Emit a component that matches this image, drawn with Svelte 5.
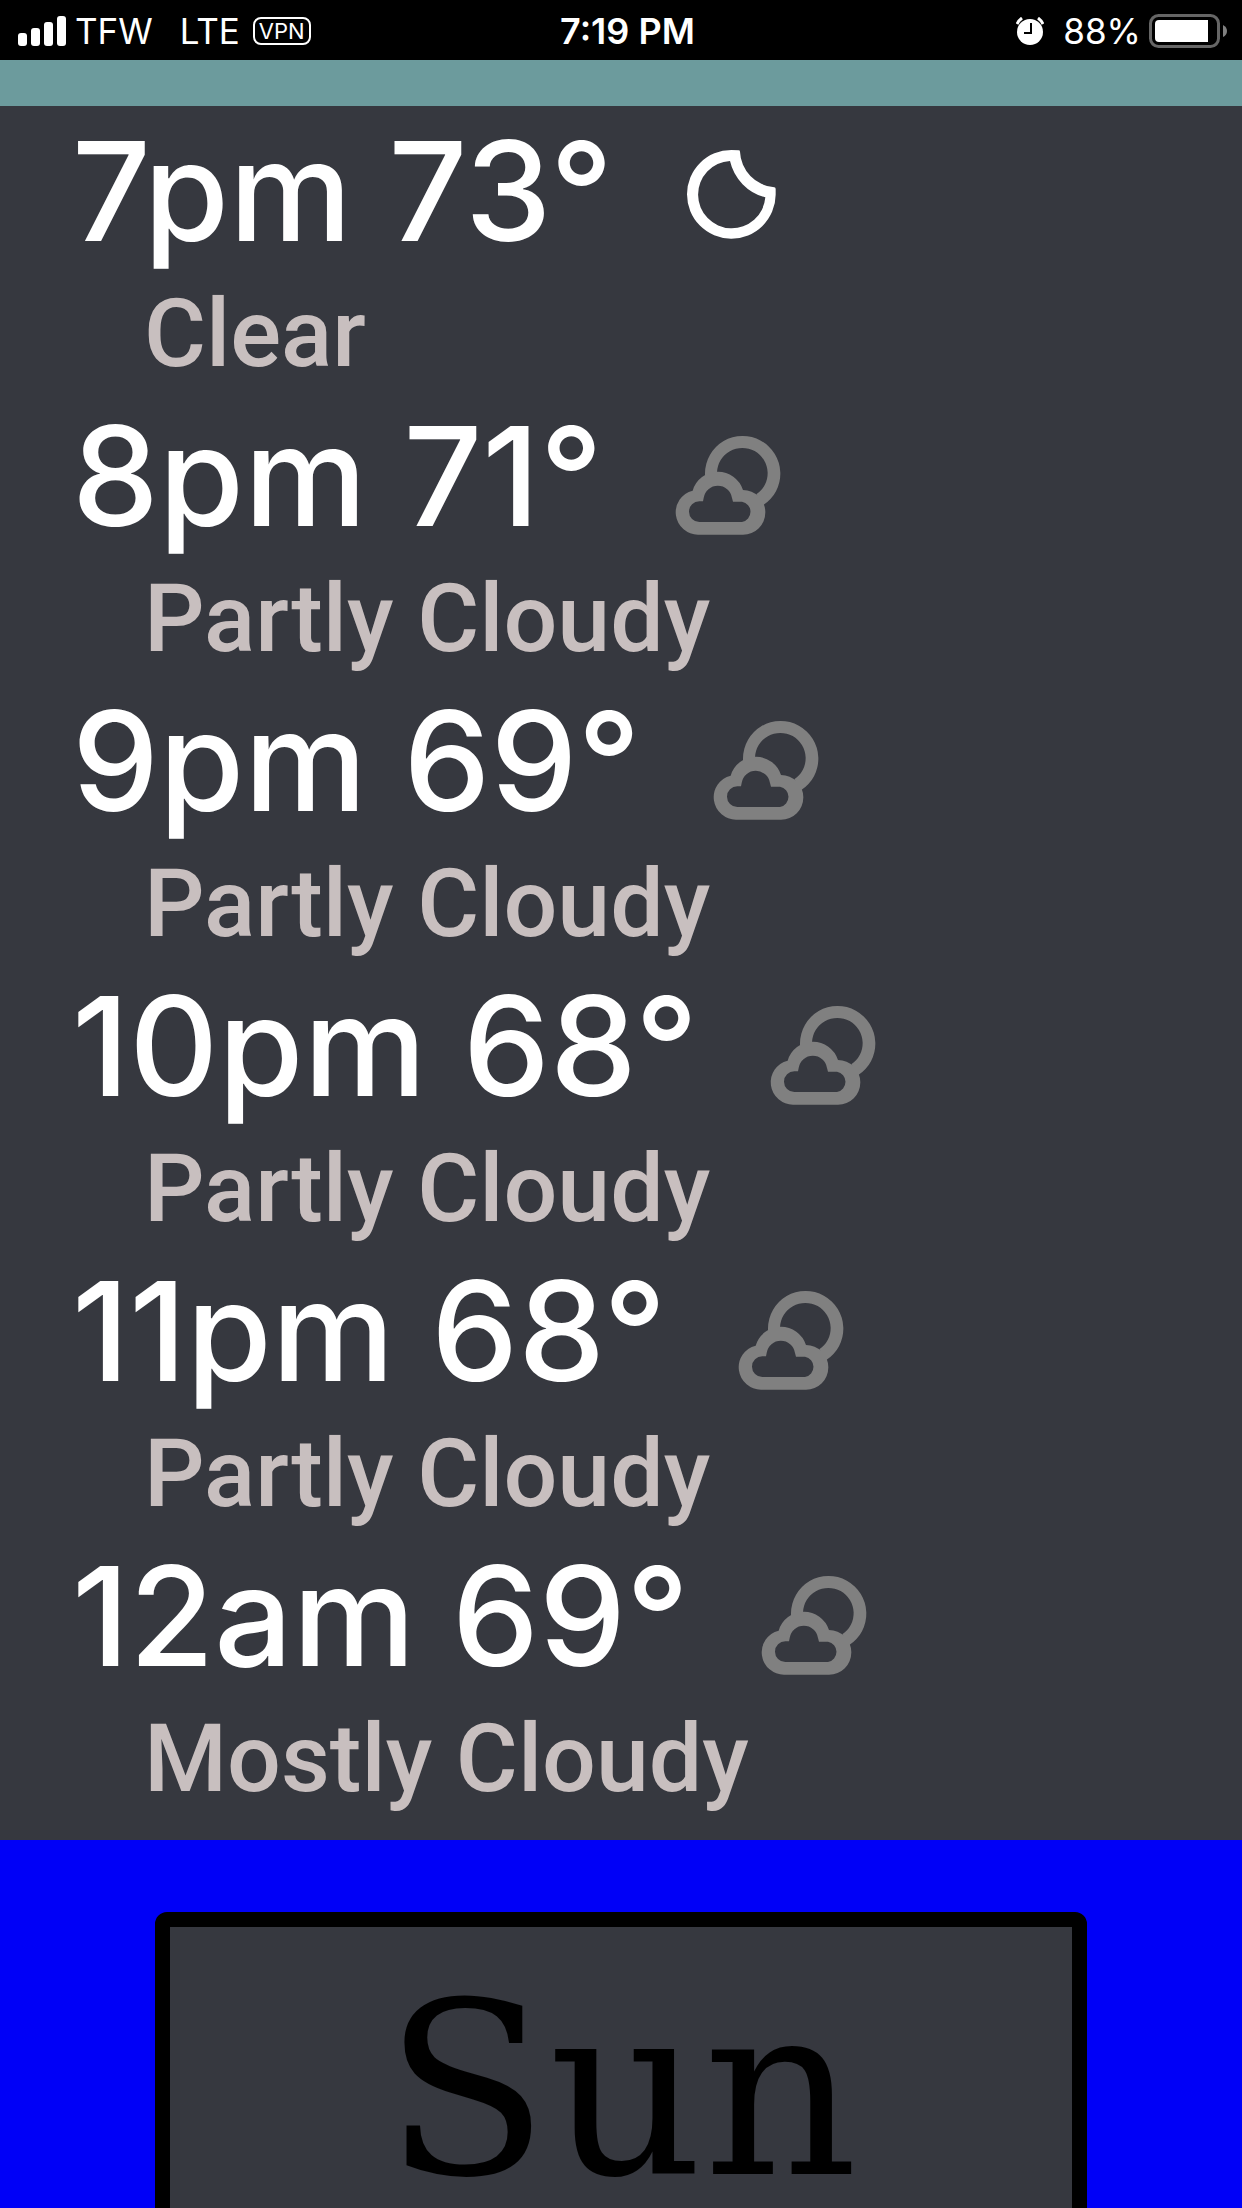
<script>
  const hours = [
    { time: '7pm', temp: 73, sky: 'Clear', icon: 'moon' },
    { time: '8pm', temp: 71, sky: 'Partly Cloudy', icon: 'cloud' },
    { time: '9pm', temp: 69, sky: 'Partly Cloudy', icon: 'cloud' },
    { time: '10pm', temp: 68, sky: 'Partly Cloudy', icon: 'cloud' },
    { time: '11pm', temp: 68, sky: 'Partly Cloudy', icon: 'cloud' },
    { time: '12am', temp: 69, sky: 'Mostly Cloudy', icon: 'cloud' }
  ];
</script>

<div class="screen">
  <header class="status">
    <div class="side">
      <svg class="signal" viewBox="0 0 48 30" aria-hidden="true">
        <rect x="0" y="17" width="9" height="13" rx="3" />
        <rect x="13" y="12" width="9" height="18" rx="3" />
        <rect x="26" y="6" width="9" height="24" rx="3" />
        <rect x="39" y="0" width="9" height="30" rx="3" />
      </svg>
      <span class="carrier">TFW</span>
      <span class="network">LTE</span>
      <span class="vpn">VPN</span>
    </div>
    <span class="clock">7:19 PM</span>
    <div class="side end">
      <svg class="alarm" viewBox="0 0 28 28" aria-hidden="true">
        <circle cx="14" cy="15" r="13" fill="#fff" />
        <path d="M1 7A16 16 0 0 1 6 1M22 1A16 16 0 0 1 27 7" stroke="#fff" stroke-width="3" fill="none" />
        <path d="M15 6V16H8" stroke="#000" stroke-width="2" fill="none" />
      </svg>
      <span class="percent">88%</span>
      <svg class="battery" viewBox="0 0 78 34" aria-hidden="true">
        <rect x="1.5" y="1.5" width="68" height="31" rx="8" fill="none" stroke="#666" stroke-width="3" />
        <path d="M10 6H59V28H10A4 4 0 0 1 6 24V10A4 4 0 0 1 10 6Z" fill="#fff" />
        <path d="M74 11Q78 13 78 17T74 23Z" fill="#808080" />
      </svg>
    </div>
  </header>

  <div class="strip"></div>

  <ul class="hours">
    {#each hours as hour}
      <li>
        <div class="reading">
          <span>{hour.time} {hour.temp}°</span>
          {#if hour.icon === 'moon'}
            <svg class="icon moon" viewBox="84 36 324 324" aria-hidden="true">
              <path
                fill-rule="evenodd"
                d="M239 61Q243 61 243 65A112 112 0 0 0 346 172Q350 172 350 177V194A133 133 0 1 1 217 60ZM213 93A101 101 0 1 0 319 202A146 146 0 0 1 213 93Z"
              />
            </svg>
          {:else}
            <svg class="icon cloud" viewBox="45 21 324 324" aria-hidden="true">
              <path d="M129 170V160A113 113 0 1 1 303 256L283 223A76 76 0 1 0 165 157V170Z" />
              <path
                fill-rule="evenodd"
                d="M110 344A67 67 0 0 1 92 212A79 79 0 0 1 243 210A67 67 0 0 1 243 344ZM112 306H240A31 31 0 0 0 240 245H213L210 234A43 43 0 0 0 125 234L123 244H112A31 31 0 0 0 112 306Z"
              />
            </svg>
          {/if}
        </div>
        <p>{hour.sky}</p>
      </li>
    {/each}
  </ul>

  <main class="days">
    <section class="day">
      <h2>Sun</h2>
    </section>
  </main>
</div>

<style>
  :global(body) {
    background: #0000f7;
    overflow: hidden;
  }

  .screen {
    height: 100vh;
    display: flex;
    flex-direction: column;
    overflow: hidden;
    font-family: Inter, "Liberation Sans", sans-serif;
  }

  .screen > * {
    flex-shrink: 0;
  }

  .status {
    display: grid;
    grid-template-columns: 1fr auto 1fr;
    align-items: center;
    height: 60px;
    padding: 0 15px 0 18px;
    box-sizing: border-box;
    background: #000;
    color: #fff;
    font-size: 35px;
    line-height: 62px;
  }

  .side {
    display: flex;
    align-items: center;
  }

  .end {
    justify-content: flex-end;
  }

  .signal {
    width: 48px;
    height: 30px;
    fill: #fff;
  }

  .carrier {
    margin-left: 9px;
  }

  .network {
    margin-left: 27px;
  }

  .vpn {
    margin-left: 13px;
    padding: 0 4px;
    border: 2px solid #fff;
    border-radius: 8px;
    font-size: 22px;
    line-height: 24px;
  }

  .clock {
    padding-left: 10px;
    font-size: 36px;
    font-weight: 600;
  }

  .alarm {
    width: 28px;
    height: 28px;
  }

  .percent {
    margin: 0 8px 0 19px;
  }

  .battery {
    width: 78px;
    height: 34px;
  }

  .strip {
    height: 46px;
    background: #6c9b9d;
  }

  .hours {
    margin: 0;
    padding: 0 72px 24px;
    list-style: none;
    background: #36383f;
    font-weight: 500;
  }

  .reading {
    display: flex;
    align-items: center;
    gap: 74px;
    color: #fff;
    font-size: 138px;
    line-height: 170px;
  }

  .icon {
    width: 108px;
    height: 108px;
    margin-top: 10px;
    overflow: visible;
  }

  .moon {
    fill: #fff;
  }

  .cloud {
    fill: #808080;
  }

  .hours p {
    margin: 0;
    padding-left: 72px;
    color: #c8bfbf;
    font-family: Roboto, "Liberation Sans", sans-serif;
    font-size: 95px;
    line-height: 115px;
  }

  .days {
    flex-grow: 1;
    padding-top: 72px;
    background: #0000f7;
  }

  .day {
    width: 75%;
    box-sizing: border-box;
    height: 720px;
    margin: 0 auto;
    padding-top: 24px;
    border: 15px solid #000;
    border-radius: 12px;
    background: #36383f;
  }

  .day h2 {
    margin: 0;
    color: #000;
    font-family: "DejaVu Serif", serif;
    font-size: 240px;
    font-weight: 400;
    line-height: 280px;
    text-align: center;
  }
</style>
